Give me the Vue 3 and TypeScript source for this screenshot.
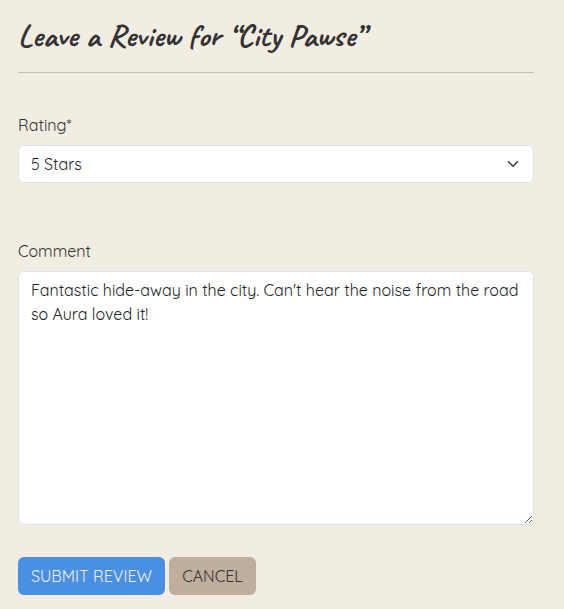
<script setup lang="ts">
import { ref } from 'vue'

const place = 'City Pawse'
const ratings: string[] = ['5 Stars', '4 Stars', '3 Stars', '2 Stars', '1 Star']
const rating = ref('5 Stars')
const comment = ref("Fantastic hide-away in the city. Can't hear the noise from the road so Aura loved it!")
</script>

<template>
  <main class="page">
    <h1 class="title">Leave a Review for “{{ place }}”</h1>
    <hr class="rule" />
    <form class="form" @submit.prevent>
      <label class="label rating-label" for="rating">Rating*</label>
      <div class="select-wrap">
        <select id="rating" v-model="rating" class="control select">
          <option v-for="r in ratings" :key="r">{{ r }}</option>
        </select>
        <svg class="chevron" viewBox="0 0 16 16" aria-hidden="true">
          <path d="m2 5 6 6 6-6" fill="none" stroke="#343a40" stroke-width="2" stroke-linecap="round" stroke-linejoin="round" />
        </svg>
      </div>
      <label class="label comment-label" for="comment">Comment</label>
      <textarea id="comment" v-model="comment" class="control textarea" spellcheck="false"></textarea>
      <div class="actions">
        <button class="btn submit" type="submit">SUBMIT REVIEW</button>
        <button class="btn cancel" type="button">CANCEL</button>
      </div>
    </form>
  </main>
</template>

<style>
body {
  background: #f2ede2;
}
</style>

<style scoped>
.page {
  box-sizing: border-box;
  height: 609px;
  padding: 18px 30px 0 18px;
  color: #333;
  font: 400 16px/24px Quicksand, Lato, sans-serif;
  overflow: hidden;
}
.title {
  margin: 0;
  height: 38px;
  font: 700 32px/36px Caveat, "Caveat Brush", Lato, sans-serif;
  letter-spacing: 0.07px;
  white-space: nowrap;
}
.rule {
  height: 1px;
  margin: 16px 0 0;
  border: 0;
  background: #c3beb4;
}
.label {
  display: block;
  height: 24px;
}
.rating-label {
  margin: 40px 0 8px;
}
.comment-label {
  margin: 56px 0 8px;
}
.select-wrap {
  display: grid;
  align-items: center;
}
.control {
  box-sizing: border-box;
  display: block;
  width: 100%;
  border: 1px solid #dee2e6;
  border-radius: 6px;
  background: #fff;
  color: #212529;
  font: inherit;
  outline: 0;
}
.select {
  grid-area: 1 / 1;
  height: 38px;
  padding: 0 36px 0 12px;
  appearance: none;
}
.chevron {
  grid-area: 1 / 1;
  justify-self: end;
  width: 16px;
  height: 12px;
  margin-right: 13px;
  pointer-events: none;
}
.textarea {
  height: 254px;
  padding: 6px 12px;
  resize: vertical;
}
.actions {
  display: flex;
  gap: 4px;
  margin-top: 32px;
}
.btn {
  height: 38px;
  padding: 0;
  border: 0;
  border-radius: 6px;
  font: inherit;
  white-space: nowrap;
}
.submit {
  width: 147px;
  background: #4a90e2;
  color: #f2ede2;
}
.cancel {
  width: 87px;
  background: #bfae9c;
  color: #333;
}
</style>
